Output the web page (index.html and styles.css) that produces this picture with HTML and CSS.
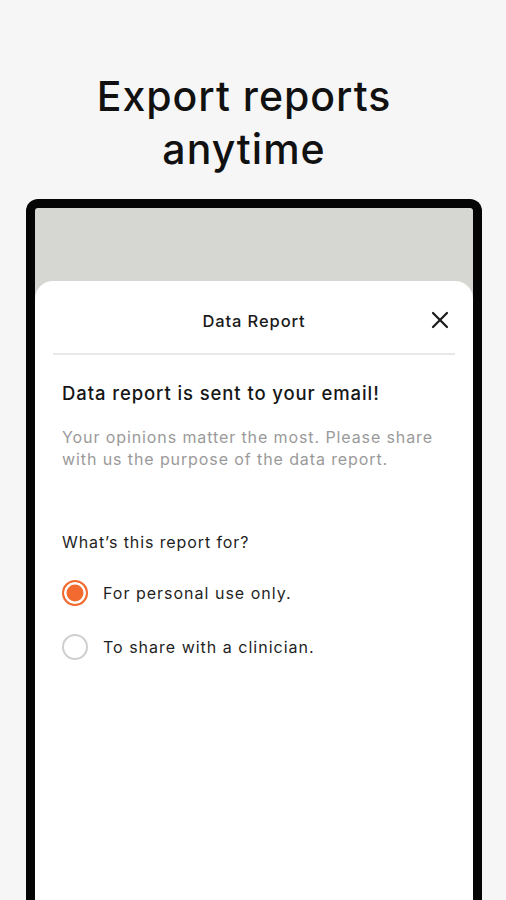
FILE: index.html
```html
<!DOCTYPE html>
<html>
<head>
<meta charset="utf-8">
<link rel="stylesheet" href="styles.css">
</head>
<body>
<h1 class="headline">Export reports<br>anytime</h1>
<div class="phone">
  <div class="screen">
    <div class="sheet">
      <div class="sheet-header">
        <span class="sheet-title">Data Report</span>
        <svg class="close" width="18" height="18" viewBox="0 0 18 18"><path d="M2 2 L16 16 M16 2 L2 16" stroke="#1a1a1a" stroke-width="2.2" stroke-linecap="round" fill="none"/></svg>
      </div>
      <div class="divider"></div>
      <div class="content">
        <p class="lead">Data report is sent to your email!</p>
        <p class="desc">Your opinions matter the most. Please share with us the purpose of the data report.</p>
        <p class="question">What’s this report for?</p>
        <div class="options">
          <div class="option"><span class="radio checked"></span><span class="label">For personal use only.</span></div>
          <div class="option"><span class="radio"></span><span class="label">To share with a clinician.</span></div>
        </div>
      </div>
    </div>
  </div>
</div>
</body>
</html>
```
FILE: styles.css
```css
* { box-sizing: border-box; }
html, body { margin: 0; padding: 0; }
body {
  width: 506px;
  height: 900px;
  overflow: hidden;
  background: #f6f6f6;
  font-family: Inter, "Noto Sans", sans-serif;
  color: #141414;
}
.headline {
  margin: 0;
  padding: 70px 18px 0 0;
  text-align: center;
  font-size: 41px;
  font-weight: 500;
  line-height: 53px;
  letter-spacing: 1px;
  color: #111;
}
.phone {
  margin: 23px 0 0 26px;
  width: 456px;
  height: 701px;
  border: 9px solid #050505;
  border-bottom: none;
  border-radius: 12px 12px 0 0;
  background: #d6d6d3;
}
.screen {
  height: 100%;
  padding-top: 73px;
}
.sheet {
  height: 100%;
  background: #fff;
  border-radius: 18px 18px 0 0;
  padding: 0 18px;
}
.sheet-header {
  position: relative;
  padding: 28px 0 20px;
  text-align: center;
  line-height: 24px;
}
.sheet-title {
  font-size: 16.5px;
  font-weight: 500;
  letter-spacing: 0.9px;
  color: #1a1a1a;
}
.close {
  position: absolute;
  right: 6px;
  top: 30px;
}
.divider {
  height: 2px;
  background: #e8e8e8;
}
.content {
  padding: 0 9px;
}
.lead {
  margin: 26px 0 0;
  font-size: 18.5px;
  font-weight: 500;
  line-height: 24px;
  letter-spacing: 0.9px;
  color: #161616;
}
.desc {
  margin: 21px 0 0;
  font-size: 16px;
  line-height: 22px;
  letter-spacing: 0.9px;
  color: #9a9a9a;
}
.question {
  margin: 61px 0 0;
  font-size: 16px;
  line-height: 22px;
  letter-spacing: 0.9px;
  color: #1f1f1f;
}
.options {
  margin-top: 27px;
  display: flex;
  flex-direction: column;
  gap: 28px;
}
.option {
  display: flex;
  align-items: center;
  gap: 15px;
  height: 26px;
}
.radio {
  width: 26px;
  height: 26px;
  border-radius: 50%;
  border: 2px solid #cfcfcf;
  flex: none;
}
.radio.checked {
  border: 2px solid #f26a2e;
  background: #f26a2e;
  box-shadow: inset 0 0 0 2.5px #fff;
}
.label {
  font-size: 16px;
  line-height: 22px;
  letter-spacing: 1px;
  color: #1f1f1f;
}
```
